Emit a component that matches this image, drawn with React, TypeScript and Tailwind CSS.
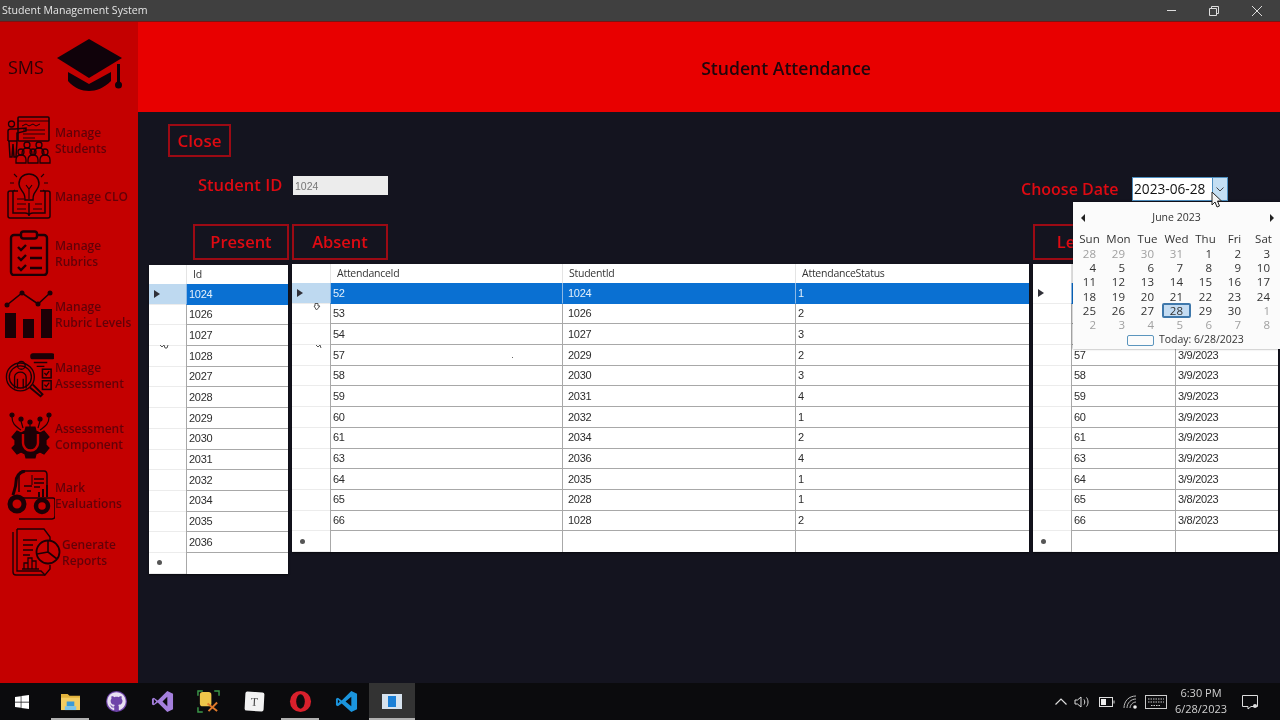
import { FaGithub, FaWindows } from 'react-icons/fa';
import type { ReactElement } from 'react';

const INK = '#1c0006';

const IconStudents = () => (
  <svg viewBox="0 0 46 48" className="w-[46px] h-[48px]" fill="none" stroke={INK} strokeWidth="1.3">
    <rect x="13" y="1" width="31" height="24" rx="1" strokeWidth="1.6" />
    <path d="M13 5h31M17 10l4-2 3 2 4-2 3 2 4-2M18 14h22M18 18h22M18 22h12" strokeWidth="1" />
    <circle cx="6.500" cy="8" r="3" />
    <path d="M3 25V15c0-1 1-2 3-2h4l11-1v3l-9 2v8M4 25l1 16h2l1-13 1 13h2l1-16M3 25h9" strokeWidth="1.500" />
    {[22, 34].map((x) => (
      <g key={x}>
        <circle cx={x} cy="29" r="3" />
        <path d={`M${x - 5} 38c0-4 2-6 5-6s5 2 5 6`} />
      </g>
    ))}
    {[16, 28, 40].map((x) => (
      <g key={x}>
        <circle cx={x} cy="36" r="3" />
        <path d={`M${x - 5} 47v-3c0-3 2-5 5-5s5 2 5 5v3z`} />
      </g>
    ))}
  </svg>
);

const IconClo = () => (
  <svg viewBox="0 0 46 50" className="w-[46px] h-[50px]" fill="none" stroke={INK} strokeWidth="1.5">
    <path d="M23 3c-6 0-10 4-10 10 0 4 3 6 5 10 1 2 1 4 1 6h8c0-2 0-4 1-6 2-4 5-6 5-10 0-6-4-10-10-10z" />
    <path d="M20 14l3 4 3-4M23 18v10" strokeWidth="1.1" />
    <path d="M8 3l3 3M38 3l-3 3M4 12h4M42 12h-4M6 21l3-2M40 21l-3-2" strokeWidth="1.1" />
    <path d="M12 20H4a2 2 0 0 0-2 2v23a2 2 0 0 0 2 2h38a2 2 0 0 0 2-2V22a2 2 0 0 0-2-2h-8" />
    <path d="M7 21v21h12c2 0 4 1 4 3 0-2 2-3 4-3h12V21M23 32v13" />
    <path d="M11 28h7M11 33h9M11 38h9M29 33h7M27 38h9" strokeWidth="1.2" />
  </svg>
);

const IconRubrics = () => (
  <svg viewBox="0 0 40 46" className="w-[40px] h-[46px]" fill="none" stroke={INK} strokeWidth="2.4">
    <rect x="2" y="5" width="36" height="40" rx="3" />
    <rect x="12" y="1.500" width="16" height="7" rx="2.500" fill="#c40000" />
    <path d="M9 17l3 3 5-5M9 27l3 3 5-5M9 37l3 3 5-5" />
    <path d="M21 18h12M21 28h12M21 38h12" />
  </svg>
);

const IconLevels = () => (
  <svg viewBox="0 0 54 48" className="w-[54px] h-[48px]" fill={INK}>
    <path d="M7 15l15-12 16 11 12-11" fill="none" stroke={INK} strokeWidth="1.6" />
    <circle cx="7" cy="15" r="2.500" />
    <circle cx="22" cy="3" r="2.500" />
    <circle cx="38" cy="14" r="2.500" />
    <circle cx="50" cy="3" r="2.500" />
    <rect x="5" y="23" width="11" height="25" />
    <rect x="23" y="29" width="11" height="19" />
    <rect x="41" y="19" width="11" height="29" />
  </svg>
);

const IconAssessment = () => (
  <svg viewBox="0 0 52 48" className="w-[50px] h-[48px]" fill="none" stroke={INK} strokeWidth="1.4">
    <circle cx="17" cy="26" r="11.500" />
    <circle cx="17" cy="26" r="14.500" />
    <path d="M27 37l11 9 2-2-10-10" strokeWidth="2" />
    <circle cx="18" cy="14" r="4" />
    <path d="M11 38V26c0-3 3-5 6-5s6 2 6 5v12M14 28v10M20 28v10" />
    <rect x="28" y="2" width="24" height="5" rx="2" fill={INK} />
    <path d="M31 11h14M34 15h8" />
    <rect x="40" y="18" width="9" height="9" strokeWidth="1.600" />
    <rect x="40" y="30" width="9" height="9" strokeWidth="1.600" />
    <path d="M42 22l2 2 3-4M42 34l2 2 3-4" />
  </svg>
);

const IconComponent = () => (
  <svg viewBox="0 0 46 48" className="w-[46px] h-[48px]" fill="none" stroke={INK} strokeWidth="1.2">
    <circle cx="6" cy="3" r="2" fill={INK} />
    <circle cx="15" cy="7" r="2" fill={INK} />
    <circle cx="24" cy="10" r="2" fill={INK} />
    <circle cx="34" cy="7" r="2" fill={INK} />
    <circle cx="43" cy="3" r="2" fill={INK} />
    <path d="M6 5c0 8 5 10 9 13M15 9l2 7M24 12v4M34 9l-2 7M43 5c0 8-5 10-9 13" />
    <path
      d="M20 15h9l1 4 4 2 4-2 5 6-3 3v5l3 3-5 6-4-2-4 2-1 4h-9l-1-4-4-2-4 2-5-6 3-3v-5l-3-3 5-6 4 2 4-2z"
      fill={INK}
    />
    <path d="M17 22v9a7.500 7.500 0 0 0 15 0v-9" stroke="#c40000" strokeWidth="2.400" />
    <path d="M24 16v16" stroke={INK} />
  </svg>
);

const IconMark = () => (
  <svg viewBox="0 0 50 50" className="w-[50px] h-[50px]" fill="none" stroke={INK} strokeWidth="1.5">
    <path d="M14 22V6c0-3 2-5 5-5h20c2 0 3 2 3 4v19" fill="#c40000" />
    <path d="M20 1c-6 1-9 6-9 11 0 5-2 9-3 13" strokeWidth="3" />
    <path d="M29 9h10M29 13h10M29 17h6M19 16h8M22 21h4" strokeWidth="1.300" />
    <path d="M27 5v10" strokeWidth="1" />
    <path d="M34 27v-5M38 27v-8M42 27V15" strokeWidth="2" />
    <path d="M12 28h36a2 2 0 0 1 2 2v16a3 3 0 0 1-3 3H14" />
    <circle cx="12" cy="34" r="7" strokeWidth="5" />
    <circle cx="37" cy="36" r="6" strokeWidth="4.500" />
  </svg>
);

const IconReports = () => (
  <svg viewBox="0 0 50 50" className="w-[50px] h-[50px]" fill="none" stroke={INK} strokeWidth="1.4">
    <path d="M2 5v40c0 2 1 3 3 3h29" />
    <path d="M6 2h27l6 8v10" />
    <path d="M6 2v42h24l4 4 5-6v-4" />
    <path d="M12 13h14M12 18h10M12 23h10M12 28h7" strokeWidth="1.500" />
    <path d="M13 42v-6h4v6M17 42v-11h4v11M21 42v-8h4v8M11 42h17" strokeWidth="1.300" />
    <circle cx="37" cy="25" r="11.500" strokeWidth="1.800" fill="#c40000" />
    <path d="M37 25V13M37 25l9 7M37 25l-11 2" strokeWidth="1.600" />
  </svg>
);

interface NavItem {
  lines: string[];
  icon: ReactElement;
  heightClass: string;
  iconClass: string;
}

const navItems: NavItem[] = [
  { lines: ['Manage', 'Students'], icon: <IconStudents />, heightClass: 'h-[56px]', iconClass: 'w-[55px] pl-[5px]' },
  { lines: ['Manage CLO'], icon: <IconClo />, heightClass: 'h-[56px]', iconClass: 'w-[55px] pl-[6px]' },
  { lines: ['Manage', 'Rubrics'], icon: <IconRubrics />, heightClass: 'h-[58px]', iconClass: 'w-[55px] pl-[9px]' },
  { lines: ['Manage', 'Rubric Levels'], icon: <IconLevels />, heightClass: 'h-[64px]', iconClass: 'w-[55px]' },
  { lines: ['Manage', 'Assessment'], icon: <IconAssessment />, heightClass: 'h-[58px]', iconClass: 'w-[55px] pl-[4px]' },
  { lines: ['Assessment', 'Component'], icon: <IconComponent />, heightClass: 'h-[64px]', iconClass: 'w-[55px] pl-[6px]' },
  { lines: ['Mark', 'Evaluations'], icon: <IconMark />, heightClass: 'h-[54px]', iconClass: 'w-[55px] pl-[5px]' },
  { lines: ['Generate', 'Reports'], icon: <IconReports />, heightClass: 'h-[60px]', iconClass: 'w-[62px] pl-[11px]' },
];

const Sidebar = () => (
  <aside className="w-[138px] shrink-0 bg-[#c40000] flex flex-col">
    <div className="h-[90px] shrink-0 flex items-center pl-[8px] gap-[13px]">
      <span className="text-[18px] font-medium text-[#2a0006] w-[36px]">SMS</span>
      <svg viewBox="0 0 66 54" className="w-[66px] h-[54px] mt-[-2px]" fill="#10020a">
        <path d="M0 19L32 0l33 19-33 20z" />
        <path d="M11 33l21 12 22-12v9c-7 7-15 10-22 10s-15-3-21-10z" />
        <rect x="60" y="25" width="3" height="20" />
        <circle cx="61.500" cy="46" r="3.500" />
      </svg>
    </div>
    <nav className="flex flex-col">
      {navItems.map((item) => (
        <div key={item.lines.join(' ')} className={`flex items-center ${item.heightClass}`}>
          <div className={`shrink-0 flex items-center ${item.iconClass}`}>{item.icon}</div>
          <div className="mt-[1px] text-[12px] leading-[16px] font-semibold text-[#620008] whitespace-nowrap">
            {item.lines.map((line) => (
              <div key={line}>{line}</div>
            ))}
          </div>
        </div>
      ))}
    </nav>
  </aside>
);

interface GridColumn {
  title: string;
  widthClass: string;
  cellClass?: string;
}

interface GridProps {
  widthClass: string;
  headerClass: string;
  columns: GridColumn[];
  rows: string[][];
  selectedHeader?: boolean;
}

const RowArrow = () => (
  <svg viewBox="0 0 6 8" className="w-[6px] h-[8px] ml-[5px]" fill="#303038">
    <path d="M0 0l6 4-6 4z" />
  </svg>
);

const DataGrid = ({ widthClass, headerClass, columns, rows, selectedHeader = true }: GridProps) => (
  <div className={`bg-white shrink-0 shadow-[0_1px_2px_rgba(0,0,0,0.6)] font-['Liberation_Sans',sans-serif] text-[11px] tracking-[-0.3px] text-[#2c2c2c] ${widthClass}`}>
    <div className="flex h-[19px]">
      <div className={`shrink-0 ${headerClass}`} />
      {columns.map((col, j) => (
        <div key={j} className={`${col.widthClass} border-l border-[#e4e4e4] pl-[6px] font-['Open_Sans',sans-serif] text-[10.5px] tracking-[-0.25px] leading-[19px] text-[#333]`}>
          {col.title}
        </div>
      ))}
    </div>
    {[...rows, columns.map(() => '')].map((row, i) => {
      const isNew = i === rows.length;
      const isFirst = i === 0;
      return (
        <div key={i} className="flex h-[20.7px]">
          <div
            className={`shrink-0 flex items-center border-b border-[#ececec] ${headerClass} ${
              isFirst && selectedHeader ? 'bg-[#bed9f0]' : ''
            }`}
          >
            {isFirst && <RowArrow />}
            {isNew && <span className="ml-[8px] w-[5px] h-[5px] rounded-full bg-[#555]" />}
          </div>
          {row.map((cell, j) => (
            <div
              key={j}
              className={`${columns[j].widthClass} flex items-center border-l border-b border-[#a8a8a8] pl-[2px] ${
                isFirst ? 'bg-[#0a70d2] text-[#e4f0fb] border-l-[#8db8e4] border-b-[#0a70d2]' : ''
              } ${isNew ? 'border-b-0' : ''} ${columns[j].cellClass ?? ''}`}
            >
              {cell}
            </div>
          ))}
        </div>
      );
    })}
  </div>
);

const studentIds = ['1024', '1026', '1027', '1028', '2027', '2028', '2029', '2030', '2031', '2032', '2034', '2035', '2036'];

const attendance = [
  ['52', '1024', '1'],
  ['53', '1026', '2'],
  ['54', '1027', '3'],
  ['57', '2029', '2'],
  ['58', '2030', '3'],
  ['59', '2031', '4'],
  ['60', '2032', '1'],
  ['61', '2034', '2'],
  ['63', '2036', '4'],
  ['64', '2035', '1'],
  ['65', '2028', '1'],
  ['66', '1028', '2'],
];

// first three rows sit behind the open calendar
const attendanceDates = attendance.map((row, i) => {
  if (i < 3) return ['', ''];
  return [row[0], i > 9 ? '3/8/2023' : '3/9/2023'];
});

const RedButton = ({ label, className }: { label: string; className: string }) => (
  <button className={`border-2 border-[#9c0a14] text-[#de0a12] font-semibold text-[16.5px] flex items-center justify-center shrink-0 ${className}`}>
    {label}
  </button>
);

const calendarWeeks = [
  [28, 29, 30, 31, 1, 2, 3],
  [4, 5, 6, 7, 8, 9, 10],
  [11, 12, 13, 14, 15, 16, 17],
  [18, 19, 20, 21, 22, 23, 24],
  [25, 26, 27, 28, 29, 30, 1],
  [2, 3, 4, 5, 6, 7, 8],
];

const Calendar = () => (
  <div className="absolute left-[935px] top-[90px] w-[207px] h-[147px] bg-[#fbfbfb] pl-[2px] text-[11.5px] text-[#333] shadow-[0_0_2px_rgba(0,0,0,0.5)] z-10">
    <div className="flex items-center justify-between h-[30px] pl-[6px] pr-[6px] pt-[2px]">
      <svg viewBox="0 0 4 8" className="w-[4px] h-[8px]" fill="#222"><path d="M4 0L0 4l4 4z" /></svg>
      <span className="text-[10.5px] mr-[2px]">June 2023</span>
      <svg viewBox="0 0 4 8" className="w-[4px] h-[8px]" fill="#222"><path d="M0 0l4 4-4 4z" /></svg>
    </div>
    <div className="grid grid-cols-[repeat(7,29px)] h-[14px] leading-[14px]">
      {['Sun', 'Mon', 'Tue', 'Wed', 'Thu', 'Fri', 'Sat'].map((d) => (
        <span key={d} className="text-center">{d}</span>
      ))}
    </div>
    <div className="grid grid-cols-[repeat(7,29px)] auto-rows-[14.2px] leading-[14px] mt-[1px]">
      {calendarWeeks.flatMap((week, w) =>
        week.map((day, d) => {
          const muted = (w === 0 && d < 4) || (w === 4 && d === 6) || w === 5;
          const today = w === 4 && d === 3;
          return (
            <span key={`${w}-${d}`} className={`text-right pr-[8px] relative ${muted ? 'text-[#a0a0a0]' : ''}`}>
              {today && <span className="absolute inset-x-0 -top-px h-[15px] bg-[#c4dcf2] border-2 border-[#3f78ab] rounded-[2px]" />}
              <span className="relative">{day}</span>
            </span>
          );
        }),
      )}
    </div>
    <div className="flex items-center h-[14px] pl-[52px] gap-[5px] mt-[1px]">
      <span className="w-[27px] h-[11px] border border-[#5b95bd] rounded-[2px]" />
      <span className="text-[10.5px]">Today: 6/28/2023</span>
    </div>
  </div>
);

const Cursor = () => (
  <svg viewBox="0 0 12 18" className="absolute left-[1073px] top-[79px] w-[12px] h-[18px] z-20" fill="#f4f4f4" stroke="#222" strokeWidth="1">
    <path d="M1 1v13l3-3 2 5 2.500-1-2-5h4z" />
  </svg>
);

// leftover smears from the screen recording, drawn over the grids
const GridSmears = () => (
  <>
    <svg viewBox="0 0 8 8" className="absolute left-[175px] top-[191px] w-[8px] h-[8px]" fill="none" stroke="#555"><path d="M2 3V.5h3V3h2L3.500 7 1 3z" /></svg>
    <svg viewBox="0 0 10 5" className="absolute left-[22px] top-[232px] w-[10px] h-[5px]" fill="none" stroke="#555"><path d="M0 1l2 2 2-2 1 3 2 0 1-3" /></svg>
    <svg viewBox="0 0 6 5" className="absolute left-[178px] top-[232px] w-[6px] h-[5px]" fill="none" stroke="#555"><path d="M0 1l2 2 2-2 1 3" /></svg>
    <span className="absolute left-[374px] top-[245px] w-px h-px bg-[#666]" />
  </>
);

const TaskIcon = ({ children, active, underline }: { children: ReactElement; active?: boolean; underline?: boolean }) => (
  <div className={`relative w-[46px] h-full flex items-center justify-center ${active ? 'bg-[#333333]' : ''}`}>
    {children}
    {(underline || active) && <span className={`absolute bottom-0 h-[2px] bg-[#b0b0b0] ${active ? 'inset-x-0' : 'inset-x-[4px]'}`} />}
  </div>
);

const Taskbar = () => (
  <footer className="h-[37px] shrink-0 bg-[#0b0b0d] flex items-center">
    <div className="w-[47px] h-full flex items-center justify-center pr-[3px]">
      <FaWindows className="w-[16px] h-[16px] text-white" />
    </div>
    <TaskIcon underline>
      <svg viewBox="0 0 22 20" className="w-[21px] h-[19px]">
        <path d="M1 2h7l2 2h11v15H1z" fill="#e2b23c" />
        <rect x="1" y="6" width="20" height="13" fill="#f4cd62" />
        <rect x="7" y="10" width="8" height="5" fill="#3a9ad9" />
        <rect x="5" y="15" width="12" height="4" fill="#7cc4ec" />
      </svg>
    </TaskIcon>
    <TaskIcon>
      <div className="w-[21px] h-[21px] rounded-full bg-[#6e43a8] flex items-center justify-center">
        <FaGithub className="w-[19px] h-[19px] text-[#e8e0f2]" />
      </div>
    </TaskIcon>
    <TaskIcon>
      <svg viewBox="0 0 24 24" className="w-[23px] h-[23px]">
        <path d="M17 1l6 3v16l-6 3-10-10-4 3-2-1V9l2-1 4 3z" fill="#a47fdc" />
        <path d="M17 7l-5 5 5 5z" fill="#0b0b0d" />
        <path d="M3 9.500v5l2.500-2.500z" fill="#0b0b0d" />
      </svg>
    </TaskIcon>
    <TaskIcon>
      <svg viewBox="0 0 24 24" className="w-[23px] h-[23px]" fill="none">
        <path d="M1 6V1h5M18 1h5v5M1 18v5h5" stroke="#3d9a4a" strokeWidth="1.500" />
        <rect x="3" y="2" width="12" height="15" rx="3" fill="#eec64a" />
        <path d="M11 14l10 8M21 13l-9 9" stroke="#e0792a" strokeWidth="2" />
      </svg>
    </TaskIcon>
    <TaskIcon underline={false}>
      <div className="w-[19px] h-[19px] bg-[#f2f2f2] rounded-[2px] rotate-[3deg] flex items-center justify-center text-[12px] leading-none font-['Liberation_Serif',serif] text-[#444]">
        T
      </div>
    </TaskIcon>
    <TaskIcon underline>
      <svg viewBox="0 0 24 24" className="w-[23px] h-[23px]">
        <circle cx="12" cy="12" r="11" fill="#d8202c" />
        <ellipse cx="12" cy="12" rx="4.500" ry="7.500" fill="#0b0b0d" />
      </svg>
    </TaskIcon>
    <TaskIcon>
      <svg viewBox="0 0 24 24" className="w-[23px] h-[23px]">
        <path d="M17 1l6 3v16l-6 3-10-9-4 3-2-1V9l2-1 4 3z" fill="#1b95de" />
        <path d="M17 7l-6 5 6 5z" fill="#0b0b0d" />
        <path d="M3 10v4l2-2z" fill="#0b0b0d" />
      </svg>
    </TaskIcon>
    <TaskIcon active>
      <div className="w-[20px] h-[15px] bg-[#d6e2ee] flex items-center justify-center">
        <span className="w-[8px] h-[11px] bg-[#1a7fd6]" />
      </div>
    </TaskIcon>
    <div className="ml-auto flex items-center h-full text-[#e0e0e0]">
      <svg viewBox="0 0 12 7" className="w-[12px] h-[7px] mr-[7px]" fill="none" stroke="#ddd" strokeWidth="1.200"><path d="M.5 6.500L6 1l5.500 5.500" /></svg>
      <svg viewBox="0 0 16 14" className="w-[16px] h-[14px] mr-[9px]" fill="none" stroke="#ddd" strokeWidth="1"><path d="M1 5v4h2.500L7 12V2L3.500 5zM10 4.500c1 1.500 1 3.500 0 5M12.500 2.500c2 2.500 2 6.500 0 9" /></svg>
      <svg viewBox="0 0 16 10" className="w-[16px] h-[10px] mr-[8px]" fill="none" stroke="#ddd" strokeWidth="1"><rect x=".5" y=".5" width="13" height="9" /><rect x="2" y="2" width="5" height="6" fill="#eee" stroke="none" /><path d="M15 3.500v3" /></svg>
      <svg viewBox="0 0 16 14" className="w-[16px] h-[14px] mr-[6px]" fill="none" stroke="#bbb" strokeWidth="1"><path d="M1 13c0-7 5-12 12-12M4 13c0-5 4-9 9-9M7 13c0-3 3-6 6-6" /><circle cx="12" cy="12" r="1.800" fill="#eee" stroke="none" /></svg>
      <svg viewBox="0 0 22 14" className="w-[22px] h-[14px] mr-[5px]" fill="none" stroke="#ccc" strokeWidth="1"><rect x=".5" y=".5" width="21" height="13" /><path d="M3 4h16M3 7h16M6 10.500h10" strokeDasharray="1.500 1" /></svg>
      <div className="w-[58px] mt-[-2px] text-center font-['Open_Sans',sans-serif] text-[11px] leading-[16px] text-[#d0d0d0]">
        <div>6:30 PM</div>
        <div>6/28/2023</div>
      </div>
      <svg viewBox="0 0 16 16" className="w-[16px] h-[16px] ml-[12px] mr-[22px]" fill="none" stroke="#ddd" strokeWidth="1"><path d="M.5 1.500h15v11H9L6 15v-2.500H.5z" /><circle cx="13" cy="12" r="2" fill="#ddd" stroke="none" /></svg>
    </div>
  </footer>
);

export default function App() {
  return (
    <div className="w-[1280px] h-[720px] overflow-hidden flex flex-col font-['Open_Sans',sans-serif] bg-[#14141f] blur-[0.35px]">
      <header className="h-[22px] shrink-0 bg-[#404040] border-b border-[#7a1414] flex items-center pl-[2px] text-[10.6px] text-[#e4e4e4]">
        <span>Student Management System</span>
        <div className="ml-auto flex items-center">
          <span className="w-[9px] h-px bg-[#ddd]" />
          <svg viewBox="0 0 10 10" className="w-[10px] h-[10px] ml-[33px]" fill="none" stroke="#ddd"><path d="M.5 2.500h7v7h-7zM2.500 2.500v-2h7v7h-2" /></svg>
          <svg viewBox="0 0 10 10" className="w-[10px] h-[10px] ml-[33px] mr-[18px]" fill="none" stroke="#ddd"><path d="M0 0l10 10M10 0L0 10" /></svg>
        </div>
      </header>
      <div className="flex flex-1 min-h-0">
        <Sidebar />
        <div className="flex-1 min-w-0 flex flex-col">
          <div className="h-[90px] shrink-0 bg-[#e80000] flex items-center justify-center pl-[154px] pt-[2px] font-semibold text-[17.6px] text-[#20060c]">
            Student Attendance
          </div>
          <main className="relative flex-1 min-h-0">
            <div className="pl-[30px] pt-[12px]">
              <RedButton label="Close" className="w-[63px] h-[33px] text-[17px]" />
            </div>
            <div className="flex items-start mt-[19px] h-[25px]">
              <span className="ml-[60px] w-[95px] text-[16.5px] font-semibold text-[#de0a12] leading-[17px]">Student ID</span>
              <input
                readOnly
                value="1024"
                className="w-[95px] h-[19px] bg-[#ececec] pl-[2px] text-[10.5px] text-[#777] outline-none font-['Liberation_Sans',sans-serif]"
              />
              <span className="ml-[633px] mt-[4px] text-[16px] font-semibold text-[#de0a12] leading-[19px]">Choose Date</span>
              <div className="ml-auto mr-[52px] mt-px flex h-[24px] w-[96px] border border-[#4d8fc0] bg-white">
                <span className="flex-1 pl-px text-[13.7px] leading-[21px] text-[#111] font-['Open_Sans',sans-serif]">2023-06-28</span>
                <span className="w-[15px] bg-[#c4dff3] border-l border-[#4d8fc0] flex items-center justify-center">
                  <svg viewBox="0 0 8 5" className="w-[8px] h-[5px]" fill="none" stroke="#444"><path d="M.5.500L4 4 7.500.500" /></svg>
                </span>
              </div>
            </div>
            <div className="flex mt-[23px] ml-[55px] gap-[3px]">
              <RedButton label="Present" className="w-[96px] h-[36px]" />
              <RedButton label="Absent" className="w-[96px] h-[36px]" />
              <RedButton label="Le" className="w-[66px] h-[36px] ml-[642px]" />
            </div>
            <div className="flex items-start mt-[4px] ml-[11px] gap-[4px]">
              <div className="mt-px">
                <DataGrid
                  widthClass="w-[139px]"
                  headerClass="w-[37px]"
                  columns={[{ title: 'Id', widthClass: 'w-[102px]' }]}
                  rows={studentIds.map((id) => [id])}
                />
              </div>
              <DataGrid
                widthClass="w-[737px]"
                headerClass="w-[38px]"
                columns={[
                  { title: 'AttendanceId', widthClass: 'w-[232px]' },
                  { title: 'StudentId', widthClass: 'w-[233px]', cellClass: 'pl-[5px]' },
                  { title: 'AttendanceStatus', widthClass: 'w-[234px]' },
                ]}
                rows={attendance}
              />
              <DataGrid
                widthClass="w-[245px]"
                headerClass="w-[38px]"
                columns={[
                  { title: '', widthClass: 'w-[104px]' },
                  { title: '', widthClass: 'w-[103px]' },
                ]}
                rows={attendanceDates}
                selectedHeader={false}
              />
            </div>
            <GridSmears />
            <Calendar />
            <Cursor />
          </main>
        </div>
      </div>
      <Taskbar />
    </div>
  );
}
